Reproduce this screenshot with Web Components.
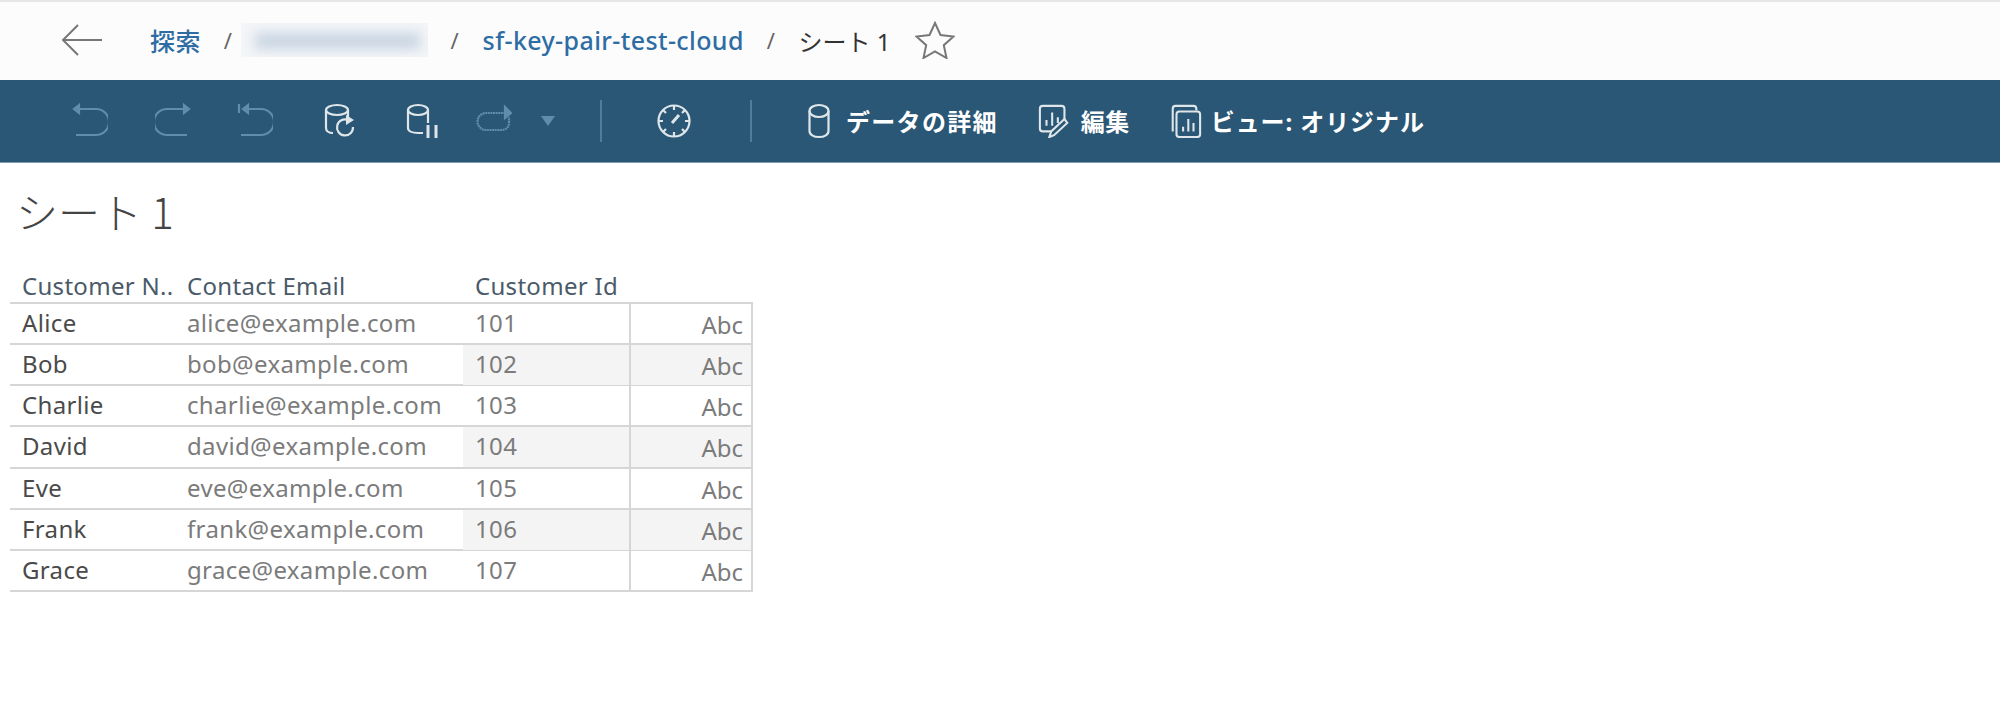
<!DOCTYPE html>
<html lang="ja">
<head>
<meta charset="utf-8">
<title>シート 1</title>
<style>
    html, body { margin: 0; background: #fff; }
    body { width: 2000px; height: 725px; overflow: hidden; font-family: "Noto Sans", "Noto Sans CJK JP", sans-serif; }
</style>
</head>
<body>
<app-breadcrumb>
    <crumb-link>探索</crumb-link>
    <crumb-blur></crumb-blur>
    <crumb-link>sf-key-pair-test-cloud</crumb-link>
    <crumb-current>シート 1</crumb-current>
</app-breadcrumb>
<app-toolbar></app-toolbar>
<sheet-view title-text="シート 1"></sheet-view>

<script>
const CUSTOMERS = [
    ['Alice', 'alice@example.com', '101'],
    ['Bob', 'bob@example.com', '102'],
    ['Charlie', 'charlie@example.com', '103'],
    ['David', 'david@example.com', '104'],
    ['Eve', 'eve@example.com', '105'],
    ['Frank', 'frank@example.com', '106'],
    ['Grace', 'grace@example.com', '107'],
];

// all drawn in a 36x36 box
const ICONS = {
    undo: '<path d="M2 6h22a10 10 0 0 1 0 26H4"/><path d="M7 2 2 6l5 4z" fill="currentColor"/>',
    redo: '<path d="M34 6H12a10 10 0 0 0 0 26h20"/><path d="m29 2 5 4-5 4z" fill="currentColor"/>',
    revert: '<path d="M2 1v9"/><path d="M7 6h17a10 10 0 0 1 0 26H4"/><path d="M11 2 6 6l5 4z" fill="currentColor"/>',
    refresh: '<ellipse cx="14" cy="7" rx="11" ry="5"/><path d="M3 7v18c0 3 3 5 7 5M25 7v8"/><path d="M30 24a8 8 0 1 1-5-7"/><path d="m23 12 8 5-8 5z" fill="currentColor" stroke="none"/>',
    pause: '<ellipse cx="13" cy="7" rx="10" ry="5"/><path d="M3 7v18c0 3 4 5 10 5h5M23 7v13"/><path d="M23 22v13M31 22v13" stroke-width="3"/>',
    loop: '<path d="M32 10H10a8 8 0 0 0 0 17h16a7 7 0 0 0 7-7v-6" stroke-dasharray="2 .6"/><path d="m29 4 6 6-6 5z" fill="currentColor"/>',
    caret: '<path d="M5 13h14l-7 10z" fill="currentColor" stroke="none"/>',
    clock: '<circle cx="18" cy="18" r="15.5"/><path d="M18 3v4M18 29v4M3 18h4M29 18h4M7 7l3 3M29 7l-3 3M7 29l3-3M29 29l-3-3"/><path d="m16 20 7-8" stroke-width="3"/>',
    data: '<ellipse cx="18" cy="8" rx="9.5" ry="6"/><path d="M8.500 8v20c0 3.500 4 6 9.500 6s9.500-2.500 9.500-6V8"/>',
    edit: '<path d="M14 29H5a3 3 0 0 1-3-3V5a3 3 0 0 1 3-3h20a3 3 0 0 1 3 3v12"/><path d="M9 23v-6M15 23V9M21 20v-6"/><path d="m12 35 2-6 14-13 3 4-14 13z"/>',
    view: '<path d="M5 29V5a3 3 0 0 1 3-3h19a3 3 0 0 1 3 3v2"/><rect x="9" y="8" width="25" height="27" rx="3"/><path d="M16 29v-5M21.500 29V16M27 29v-9"/>',
};

class AppBreadcrumb extends HTMLElement {
    constructor() {
        super();
        this.attachShadow({ mode: 'open' });
        this.shadowRoot.innerHTML = `
            <style>
                :host {
                    display: flex;
                    align-items: center;
                    box-sizing: border-box;
                    height: 80px;
                    padding: 0 0 2px 61px;
                    background: #fcfcfc;
                    border-top: 2px solid #e6e6e6;
                }
                svg { width: 42px; height: 36px; margin-right: 47px; fill: none; stroke: #777; stroke-width: 2; }
                .star { width: 40px; height: 38px; margin: 0 0 0 25px; stroke: #777; }
            </style>
            <svg viewBox="0 0 42 36"><path d="M2 18h39M17 3 2 18l15 15"/></svg>
            <slot></slot>
            <svg class="star" viewBox="0 0 40 38"><path d="m20 2 5.500 12 13 1.500-9.700 8.700 2.700 12.800L20 30.500 8.500 37l2.700-12.800-9.700-8.700 13-1.500z"/></svg>
        `;
    }
}

class CrumbLink extends HTMLElement {
    constructor() {
        super();
        this.attachShadow({ mode: 'open' });
        this.shadowRoot.innerHTML = `
            <style>
                :host { display: inline-flex; align-items: center; color: #2e6da4; font-weight: 500; font-size: 25px; letter-spacing: .4px; }
                i { font-style: normal; font-weight: 400; color: #666; font-size: 22px; margin: 0 23px 0 23px; }
            </style>
            <slot></slot><i>/</i>
        `;
    }
}

class CrumbBlur extends HTMLElement {
    constructor() {
        super();
        this.attachShadow({ mode: 'open' });
        this.shadowRoot.innerHTML = `
            <style>
                :host { display: inline-flex; align-items: center; margin-left: -14px; font-size: 22px; }
                .box { width: 187px; height: 34px; overflow: hidden; background: #f3f5f8; }
                .smear { width: 165px; height: 16px; margin: 10px 0 0 14px; background: #c9d5e2; filter: blur(6px); }
                i { font-style: normal; color: #666; margin: 0 24px 0 22px; }
            </style>
            <div class="box"><div class="smear"></div></div><i>/</i>
        `;
    }
}

class CrumbCurrent extends HTMLElement {
    constructor() {
        super();
        this.attachShadow({ mode: 'open' });
        this.shadowRoot.innerHTML = `
            <style>
                :host { display: inline-block; color: #333; font-size: 24px; }
            </style>
            <slot></slot>
        `;
    }
}

class ToolIcon extends HTMLElement {
    constructor() {
        super();
        this.attachShadow({ mode: 'open' });
    }

    connectedCallback() {
        const name = this.getAttribute('name');
        const size = this.getAttribute('size') || 36;
        const off = this.hasAttribute('off');
        const vb = name === 'caret' ? '0 0 24 36' : '0 0 36 36';
        const w = name === 'caret' ? 24 : size;
        const label = this.textContent.trim() ? '<span><slot></slot></span>' : '';
        this.shadowRoot.innerHTML = `
            <style>
                :host {
                    display: inline-flex;
                    align-items: center;
                    color: ${off ? '#5e8eab' : '#dfe6ea'};
                    font-size: 24px;
                    font-weight: 700;
                    white-space: nowrap;
                }
                svg { width: ${w}px; height: ${size}px; fill: none; stroke: currentColor; stroke-width: 2.2; }
                span { color: #fff; margin: -2px 0 0 9px; letter-spacing: var(--track, .5px); }
            </style>
            <svg viewBox="${vb}">${ICONS[name]}</svg>
            ${label}
        `;
    }
}

class AppToolbar extends HTMLElement {
    constructor() {
        super();
        this.attachShadow({ mode: 'open' });
        this.shadowRoot.innerHTML = `
            <style>
                :host {
                    display: flex;
                    align-items: center;
                    box-sizing: border-box;
                    height: 83px;
                    padding-left: 72px;
                    background: #2a5775;
                    border-bottom: 1px solid #7e9aad;
                }
                .sep { width: 2px; height: 42px; background: #4f7d9b; }
            </style>
            <tool-icon name="undo" off></tool-icon>
            <tool-icon name="redo" off style="margin-left:47px"></tool-icon>
            <tool-icon name="revert" off style="margin-left:46px"></tool-icon>
            <tool-icon name="refresh" style="margin-left:50px"></tool-icon>
            <tool-icon name="pause" style="margin-left:46px"></tool-icon>
            <tool-icon name="loop" off style="margin-left:35px"></tool-icon>
            <tool-icon name="caret" off style="margin-left:24px"></tool-icon>
            <div class="sep" style="margin-left:40px"></div>
            <tool-icon name="clock" style="margin-left:54px"></tool-icon>
            <div class="sep" style="margin-left:58px"></div>
            <tool-icon name="data" style="margin-left:49px;--track:1.3px">データの詳細</tool-icon>
            <tool-icon name="edit" size="34" style="margin-left:40px">編集</tool-icon>
            <tool-icon name="view" size="34" style="margin-left:38px;--track:.9px">ビュー: オリジナル</tool-icon>
        `;
    }
}

class CustomerRow extends HTMLElement {
    connectedCallback() {
        if (this.shadowRoot) return;
        this.attachShadow({ mode: 'open' });
        const [name, email, id] = JSON.parse(this.getAttribute('cells'));
        const band = this.hasAttribute('band');
        this.shadowRoot.innerHTML = `
            <style>
                :host {
                    display: grid;
                    grid-template-columns: 165px 288px 166px 124px;
                    box-sizing: border-box;
                    height: 41.14px;
                    border-bottom: 2px solid #d6d6d6;
                    font-size: 24px;
                    letter-spacing: .35px;
                }
                div { box-sizing: border-box; padding: 0 0 0 12px; line-height: 38px; white-space: nowrap; }
                .name { color: #4a4a4a; }
                .email { color: #7b7b7b; }
                .id { color: #7b7b7b; background: ${band ? '#f4f4f4' : 'transparent'}; }
                .abc {
                    color: #7b7b7b;
                    padding: 2px 8px 0 0;
                    letter-spacing: 0;
                    text-align: right;
                    border-left: 2px solid #d6d6d6;
                    border-right: 2px solid #d6d6d6;
                    background: ${band ? '#f4f4f4' : 'transparent'};
                }
            </style>
            <div class="name">${name}</div>
            <div class="email">${email}</div>
            <div class="id">${id}</div>
            <div class="abc">Abc</div>
        `;
    }
}

class SheetView extends HTMLElement {
    constructor() {
        super();
        this.attachShadow({ mode: 'open' });
    }

    connectedCallback() {
        const rows = CUSTOMERS.map((cells, i) =>
            `<customer-row cells='${JSON.stringify(cells)}' ${i % 2 ? 'band' : ''}></customer-row>`).join('');
        this.shadowRoot.innerHTML = `
            <style>
                :host { display: block; padding: 20px 0 0 10px; width: 743px; }
                h1 {
                    margin: 0 0 34px 6px;
                    font: 300 42px/56px "Noto Sans CJK JP", "Noto Sans", sans-serif;
                    color: #444;
                }
                .head {
                    display: grid;
                    grid-template-columns: 165px 288px 290px;
                    height: 29px;
                    border-bottom: 2px solid #d6d6d6;
                    font-size: 24px;
                    letter-spacing: .3px;
                    line-height: 26px;
                    color: #4a5a68;
                }
                .head div { padding-left: 12px; white-space: nowrap; }
            </style>
            <h1>${this.getAttribute('title-text')}</h1>
            <div class="head">
                <div>Customer N..</div>
                <div>Contact Email</div>
                <div>Customer Id</div>
            </div>
            ${rows}
        `;
    }
}

customElements.define('app-breadcrumb', AppBreadcrumb);
customElements.define('crumb-link', CrumbLink);
customElements.define('crumb-blur', CrumbBlur);
customElements.define('crumb-current', CrumbCurrent);
customElements.define('tool-icon', ToolIcon);
customElements.define('app-toolbar', AppToolbar);
customElements.define('customer-row', CustomerRow);
customElements.define('sheet-view', SheetView);
</script>
</body>
</html>
